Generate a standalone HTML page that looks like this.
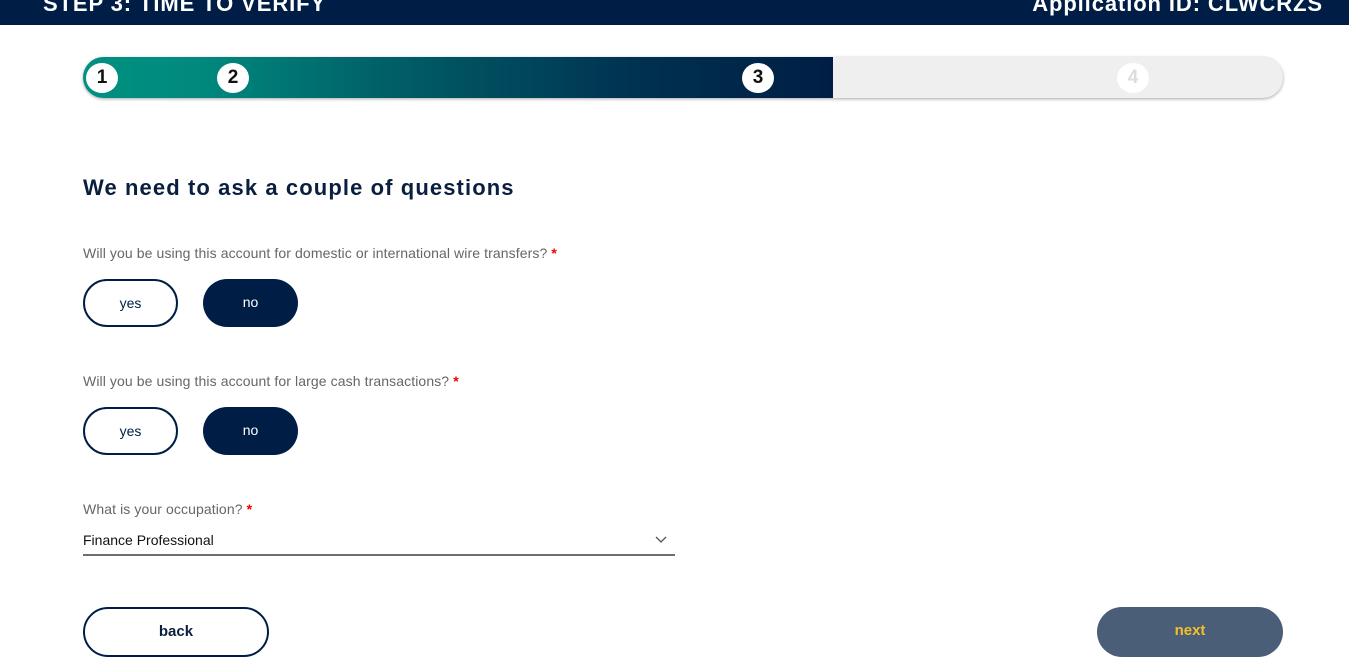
<!DOCTYPE html>
<html><head><style>
*{margin:0;padding:0;box-sizing:border-box}
body{width:1366px;height:643px;overflow:hidden;background:#fff;font-family:"Liberation Sans",sans-serif;position:relative}
.hdr{position:absolute;left:0;top:0;width:1349px;height:25px;background:#001e45;color:#fff;font-weight:bold;font-size:22px;overflow:hidden}
.hdr .l{position:absolute;left:43px;top:-9px;letter-spacing:0.9px}
.hdr .r{position:absolute;right:26px;top:-9px;letter-spacing:0.9px}
.bar{position:absolute;left:83px;top:57px;width:1200px;height:41px;border-radius:21px;background:#efefef;box-shadow:0 1px 3px rgba(0,0,0,.35);overflow:hidden}
.fill{position:absolute;left:0;top:0;width:750px;height:41px;background:linear-gradient(90deg,#009080 0%,#008a7e 15%,#006068 40%,#003050 75%,#001e45 100%)}
.dot{position:absolute;top:6px;width:32px;height:30px;border-radius:50%;background:#fff;font-weight:bold;font-size:19px;text-align:center;line-height:30px;color:#111}
.h1{position:absolute;left:83px;top:175px;font-size:22px;font-weight:bold;color:#0a1f3f;letter-spacing:1.1px}
.q{position:absolute;left:83px;font-size:14px;color:#666;letter-spacing:0.1px}
.q b{color:#e00;font-weight:bold}
.btn{position:absolute;width:95px;height:48px;border-radius:24px;font-size:14px;text-align:center;line-height:44px}
.y{border:2px solid #001e45;color:#001e45;background:#fff}
.n{background:#001e45;color:#fff;line-height:47px}
.sel{position:absolute;left:83px;top:530px;width:592px;height:26px;border-bottom:2px solid #6a6f73;font-size:14px;color:#111}
</style></head><body>
<div class="hdr"><span class="l">STEP 3: TIME TO VERIFY</span><span class="r">Application ID: CLWCRZS</span></div>
<div class="bar"><div class="fill"></div>
<div class="dot" style="left:3px">1</div>
<div class="dot" style="left:134px">2</div>
<div class="dot" style="left:659px">3</div>
<div class="dot" style="left:1034px;color:#ddd">4</div>
</div>
<div class="h1">We need to ask a couple of questions</div>
<div class="q" style="top:245px">Will you be using this account for domestic or international wire transfers? <b>*</b></div>
<div class="btn y" style="left:83px;top:279px">yes</div>
<div class="btn n" style="left:203px;top:279px">no</div>
<div class="q" style="top:373px">Will you be using this account for large cash transactions? <b>*</b></div>
<div class="btn y" style="left:83px;top:407px">yes</div>
<div class="btn n" style="left:203px;top:407px">no</div>
<div class="q" style="top:501px">What is your occupation? <b>*</b></div>
<div class="sel"><span style="position:absolute;left:0;top:2px">Finance Professional</span>
<svg style="position:absolute;right:8px;top:6px" width="12" height="8" viewBox="0 0 12 8"><path d="M1 1l5 5 5-5" fill="none" stroke="#555" stroke-width="1.3"/></svg></div>
<div style="position:absolute;left:83px;top:607px;width:186px;height:50px;border:2px solid #001e45;border-radius:25px;text-align:center;line-height:46px;font-weight:bold;font-size:15px;color:#0a1f3f">back</div>
<div style="position:absolute;left:1097px;top:607px;width:186px;height:50px;background:#4a5e78;border-radius:25px;text-align:center;line-height:48px;font-weight:bold;font-size:15px;color:#f5bf2a">next</div>
</body></html>
